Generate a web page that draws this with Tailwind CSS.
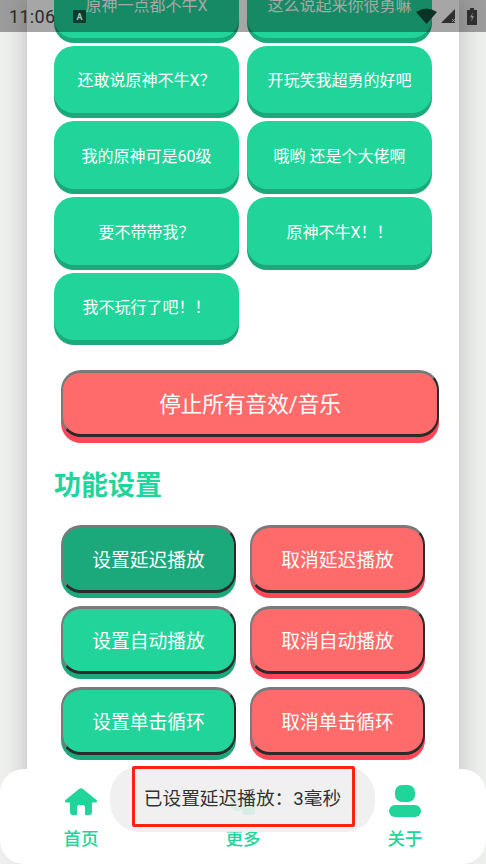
<!DOCTYPE html>
<html lang="zh-CN">
<head>
    <meta charset="UTF-8">
    <meta name="viewport" content="width=device-width, initial-scale=1.0">
    <title>原神音效</title>
    <script src="https://cdn.jsdelivr.net/npm/@tailwindcss/browser@4"></script>
</head>
<body class="relative w-[486px] h-[864px] overflow-hidden bg-[#eef0ee] font-['Roboto','Noto_Sans_CJK_SC',sans-serif]">
    <!-- Page content, scrolled -->
    <main class="mx-[27px] w-[432px] h-[864px] bg-white shadow-[0_0_24px_rgba(0,0,0,0.22)] px-[27px] overflow-hidden">
        <!-- Sound buttons -->
        <div class="grid grid-cols-[185px_185px] gap-x-2 gap-y-[3px] -mt-[30px]">
            <button class="h-[67.67px] mb-[5px] pt-[4px] rounded-[20px] bg-[#21d59a] shadow-[0_5px_0_#1ba87a] text-white text-[16px]">原神一点都不牛X</button>
            <button class="h-[67.67px] mb-[5px] pt-[4px] rounded-[20px] bg-[#21d59a] shadow-[0_5px_0_#1ba87a] text-white text-[16px]">这么说起来你很勇嘛</button>
            <button class="h-[67.67px] mb-[5px] pt-[4px] rounded-[20px] bg-[#21d59a] shadow-[0_5px_0_#1ba87a] text-white text-[16px]">还敢说原神不牛X？</button>
            <button class="h-[67.67px] mb-[5px] pt-[4px] rounded-[20px] bg-[#21d59a] shadow-[0_5px_0_#1ba87a] text-white text-[16px]">开玩笑我超勇的好吧</button>
            <button class="h-[67.67px] mb-[5px] pt-[4px] rounded-[20px] bg-[#21d59a] shadow-[0_5px_0_#1ba87a] text-white text-[16px]">我的原神可是60级</button>
            <button class="h-[67.67px] mb-[5px] pt-[4px] rounded-[20px] bg-[#21d59a] shadow-[0_5px_0_#1ba87a] text-white text-[16px]">哦哟 还是个大佬啊</button>
            <button class="h-[67.67px] mb-[5px] pt-[4px] rounded-[20px] bg-[#21d59a] shadow-[0_5px_0_#1ba87a] text-white text-[16px]">要不带带我？</button>
            <button class="h-[67.67px] mb-[5px] pt-[4px] rounded-[20px] bg-[#21d59a] shadow-[0_5px_0_#1ba87a] text-white text-[16px]">原神不牛X！！</button>
            <button class="h-[67.67px] mb-[5px] pt-[4px] rounded-[20px] bg-[#21d59a] shadow-[0_5px_0_#1ba87a] text-white text-[16px]">我不玩行了吧！！</button>
        </div>

        <!-- Stop all -->
        <button class="block w-[378px] h-[67px] mt-[25px] ml-[7px] pt-[3px] rounded-[20px] border-x-2 border-y-[3px] border-t-[#7a7a7a] border-l-[#7a7a7a] border-r-[#2b2b2b] border-b-[#2b2b2b] bg-[#ff6b6b] shadow-[0_6px_0_#ff4757] text-white text-[21.6px]">停止所有音效/音乐</button>

        <h2 class="mt-[31px] text-[27px] leading-[36px] font-bold text-[#21d59a]">功能设置</h2>

        <!-- Settings -->
        <div class="grid grid-cols-[175px_175px] gap-x-[14px] gap-y-[13px] mt-[21px] ml-[7px]">
            <button class="h-[68px] pt-[3px] rounded-[20px] border-x-2 border-y-[3px] border-t-[#7a7a7a] border-l-[#7a7a7a] border-r-[#2b2b2b] border-b-[#2b2b2b] bg-[#1ba87a] shadow-[0_5px_0_#1ba87a] text-white text-[18.8px]">设置延迟播放</button>
            <button class="h-[68px] pt-[3px] rounded-[20px] border-x-2 border-y-[3px] border-t-[#7a7a7a] border-l-[#7a7a7a] border-r-[#2b2b2b] border-b-[#2b2b2b] bg-[#ff6b6b] shadow-[0_5px_0_#ff4757] text-white text-[18.8px]">取消延迟播放</button>
            <button class="h-[68px] pt-[3px] rounded-[20px] border-x-2 border-y-[3px] border-t-[#7a7a7a] border-l-[#7a7a7a] border-r-[#2b2b2b] border-b-[#2b2b2b] bg-[#21d59a] shadow-[0_5px_0_#1ba87a] text-white text-[18.8px]">设置自动播放</button>
            <button class="h-[68px] pt-[3px] rounded-[20px] border-x-2 border-y-[3px] border-t-[#7a7a7a] border-l-[#7a7a7a] border-r-[#2b2b2b] border-b-[#2b2b2b] bg-[#ff6b6b] shadow-[0_5px_0_#ff4757] text-white text-[18.8px]">取消自动播放</button>
            <button class="h-[68px] pt-[3px] rounded-[20px] border-x-2 border-y-[3px] border-t-[#7a7a7a] border-l-[#7a7a7a] border-r-[#2b2b2b] border-b-[#2b2b2b] bg-[#21d59a] shadow-[0_5px_0_#1ba87a] text-white text-[18.8px]">设置单击循环</button>
            <button class="h-[68px] pt-[3px] rounded-[20px] border-x-2 border-y-[3px] border-t-[#7a7a7a] border-l-[#7a7a7a] border-r-[#2b2b2b] border-b-[#2b2b2b] bg-[#ff6b6b] shadow-[0_5px_0_#ff4757] text-white text-[18.8px]">取消单击循环</button>
        </div>
    </main>

    <!-- Status bar -->
    <div class="absolute top-0 left-0 w-full h-[32px] bg-black/35 flex items-center pl-[9px] pr-[9px]">
        <span class="text-[18px] text-[#2a2a2a] tracking-[0.3px]">11:06</span>
        <svg class="ml-[18px] w-[13px] h-[13px]" viewBox="0 0 13 13"><rect width="13" height="13" rx="1" fill="#0b3d2e"/><text x="6.5" y="9.5" font-size="9" font-weight="700" text-anchor="middle" fill="#9fc7b8" font-family="Roboto">A</text></svg>
        <svg class="ml-auto w-[21px] h-[16px]" viewBox="0 0 21 16"><path d="M0 4 Q10.500 -3 21 4 L10.500 16Z" fill="#0b3325"/></svg>
        <svg class="ml-[4px] w-[16px] h-[16px]" viewBox="0 0 16 16"><path d="M14 1V15H0Z" fill="#2f2f2f"/><path d="M11 11l3 3m0-3l-3 3" stroke="#999" stroke-width="1"/></svg>
        <svg class="ml-[10px] w-[10px] h-[17px]" viewBox="0 0 10 17"><path d="M3 0h4v2h3v15H0V2h3Z" fill="#2f2f2f"/><path d="M6 4L3 9.500h2L4 14l3-6H5Z" fill="#8a8a8a"/></svg>
    </div>

    <!-- Bottom nav -->
    <nav class="absolute left-0 bottom-0 w-full h-[95px] bg-white rounded-[24px] flex justify-between px-[64px] pt-[19px]">
        <a class="flex flex-col items-center w-[34px] text-[#21d59a] text-[17.5px] font-medium">
            <svg class="w-[34px] h-[30px]" viewBox="0 0 34 30" fill="#21d59a"><path d="M15 1 Q17 -.5 19 1 L32.500 12 Q34 14.500 31.500 14.500 H28 V24 Q28 27 25 27 H21 V20 Q21 17 18.500 17 H15.500 Q13 17 13 20 V27 H9 Q6 27 6 24 V14.500 H2.500 Q0 14.500 1.500 12Z"/></svg>
            <span class="mt-[8px] whitespace-nowrap">首页</span>
        </a>
        <a class="flex flex-col items-center w-[34px] text-[#21d59a] text-[17.5px] font-medium">
            <svg class="w-[34px] h-[30px]" viewBox="0 0 34 30" fill="none"><circle cx="11" cy="16" r="5" stroke="#21d59a" stroke-width="4"/><rect x="16" y="8" width="13" height="19" rx="3" fill="#21d59a"/></svg>
            <span class="mt-[8px] whitespace-nowrap">更多</span>
        </a>
        <a class="flex flex-col items-center w-[34px] text-[#21d59a] text-[17.5px] font-medium">
            <svg class="w-[34px] h-[34px] -mt-[3px]" viewBox="0 0 34 34" fill="#21d59a"><rect x="7" y="0" width="20" height="17" rx="7"/><rect x="1" y="20" width="32" height="12" rx="6"/></svg>
            <span class="mt-[7px] whitespace-nowrap">关于</span>
        </a>
    </nav>

    <!-- Toast over the nav -->
    <div class="absolute left-[110px] top-[766px] w-[265px] h-[66px] rounded-[30px] bg-[#eeeeee]/90 flex items-center justify-center text-[18.7px] text-[#333]">已设置延迟播放：3毫秒</div>
    <div class="absolute left-[132px] top-[766px] w-[223px] h-[61px] rounded-[2px] border-[3px] border-[#ff2016]"></div>
</body>
</html>
